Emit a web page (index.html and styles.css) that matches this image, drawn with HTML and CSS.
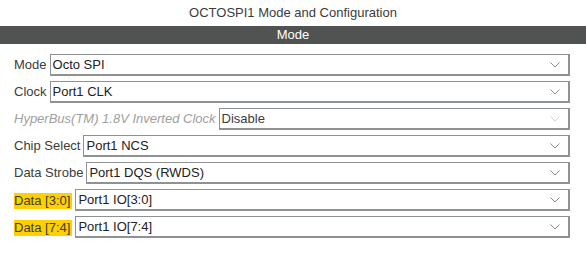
FILE: index.html
```html
<!DOCTYPE html>
<html lang="en">
  <head>
    <meta charset="UTF-8" />
    <title>OCTOSPI1 Mode and Configuration</title>
    <link rel="stylesheet" href="styles.css">
  </head>
  <body>
    <div class="title">OCTOSPI1 Mode and Configuration</div>
    <div class="bar">Mode</div>
    <div class="form">
      <div class="row">
        <span class="label">Mode</span>
        <div class="select"><span>Octo SPI</span><svg viewBox="0 0 10 6"><path d="M0.5 0.5 L5 5 L9.5 0.5" /></svg></div>
      </div>
      <div class="row">
        <span class="label">Clock</span>
        <div class="select"><span>Port1 CLK</span><svg viewBox="0 0 10 6"><path d="M0.5 0.5 L5 5 L9.5 0.5" /></svg></div>
      </div>
      <div class="row disabled">
        <span class="label">HyperBus(TM) 1.8V Inverted Clock</span>
        <div class="select"><span>Disable</span><svg viewBox="0 0 10 6"><path d="M0.5 0.5 L5 5 L9.5 0.5" /></svg></div>
      </div>
      <div class="row">
        <span class="label">Chip Select</span>
        <div class="select"><span>Port1 NCS</span><svg viewBox="0 0 10 6"><path d="M0.5 0.5 L5 5 L9.5 0.5" /></svg></div>
      </div>
      <div class="row">
        <span class="label">Data Strobe</span>
        <div class="select"><span>Port1 DQS (RWDS)</span><svg viewBox="0 0 10 6"><path d="M0.5 0.5 L5 5 L9.5 0.5" /></svg></div>
      </div>
      <div class="row">
        <span class="label mark">Data [3:0]</span>
        <div class="select"><span>Port1 IO[3:0]</span><svg viewBox="0 0 10 6"><path d="M0.5 0.5 L5 5 L9.5 0.5" /></svg></div>
      </div>
      <div class="row">
        <span class="label mark">Data [7:4]</span>
        <div class="select"><span>Port1 IO[7:4]</span><svg viewBox="0 0 10 6"><path d="M0.5 0.5 L5 5 L9.5 0.5" /></svg></div>
      </div>
    </div>
  </body>
</html>
```

FILE: styles.css
```css
* {
  margin: 0;
  padding: 0;
  box-sizing: border-box;
}
html,
body {
  width: 100%;
  height: 100%;
  background: #fff;
  font-family: "Liberation Sans", Arial, sans-serif;
  font-size: 13px;
  color: #3c3c3c;
}
.title {
  height: 26px;
  line-height: 26px;
  text-align: center;
}
.bar {
  height: 18px;
  line-height: 18px;
  background: #515352;
  color: #fff;
  text-align: center;
}
.form {
  display: flex;
  flex-direction: column;
  gap: 5px;
  padding: 10px 16px 0 14px;
}
.row {
  display: flex;
  align-items: center;
  gap: 3px;
  height: 22px;
}
.label {
  white-space: nowrap;
  line-height: 16px;
}
.label.mark {
  background: #ffd000;
  padding-right: 2px;
  margin-top: 2px;
}
.select {
  flex: 1;
  height: 22px;
  border: 2px solid #8e9295;
  border-width: 1px 2px 2px 1px;
  display: flex;
  align-items: center;
  justify-content: space-between;
  padding: 0 8px 0 2px;
  color: #222;
}
.select svg {
  width: 10px;
  height: 6px;
}
.select svg path {
  fill: none;
  stroke: #8a8a8a;
  stroke-width: 1;
}
.disabled .label {
  color: #a0a0a0;
  font-style: italic;
}
.disabled .select {
  color: #3c3c3c;
}
.disabled .select svg path {
  stroke: #d0d0d0;
}
```
